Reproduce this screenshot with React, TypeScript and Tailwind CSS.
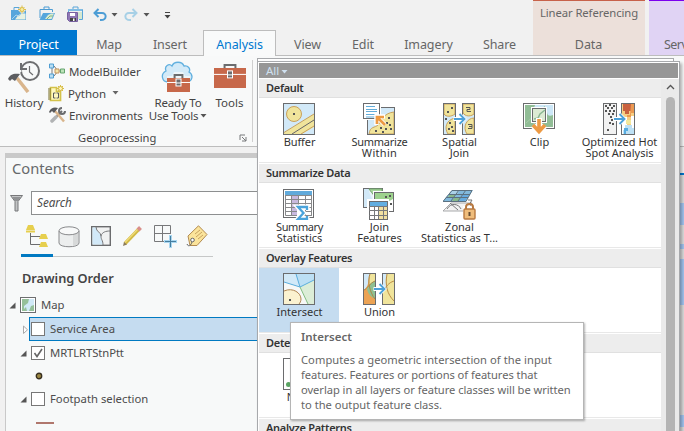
import type { ReactNode } from 'react';

type P = { children?: ReactNode };

const Svg = ({ w, h, className = '', children }: P & { w: number; h: number; className?: string }) => (
  <svg width={w} height={h} viewBox={`0 0 ${w} ${h}`} fill="none" className={`block shrink-0 ${className}`}>
    {children}
  </svg>
);

const Down = ({ className = '', color = '#666' }: { className?: string; color?: string }) => (
  <Svg w={7} h={4} className={className}><path d="M.5 0h6l-3 3.500z" fill={color} /></Svg>
);

/* ---------- quick access ---------- */
const NewProject = () => (
  <Svg w={16} h={16}>
    <path d="M3 5V2.500h5V5" stroke="#5aa5d8" />
    <path d="M0 5h15v10H0z" fill="#56a6dc" />
    <path d="M4 14.500l3-4 3-2h4.500v6z" fill="#e8f2e2" />
    <path d="M1 14l4-4 3 1 3-3h3" stroke="#a8d2ec" />
    <path d="M7 5l4-4 4 4-4 4z" fill="#f1f1f1" />
    <path d="M11 .5v8M7 4.500h8M8.500 2l5 5M13.500 2l-5 5" stroke="#dcbf4c" />
    <circle cx="11" cy="4.500" r="2" fill="#f8eca0" stroke="#dcbf4c" />
  </Svg>
);
const OpenProject = () => (
  <Svg w={16} h={16}>
    <path d="M5 4V2h5v2M1 13V4.500h12.500V7" stroke="#4d9cd3" />
    <path d="M4 8h12l-3 7H.5z" fill="#56a6dc" />
    <path d="M6 14l3-4 3-1.500h3L12.500 14z" fill="#dbead2" />
    <path d="M8 14l3-3h3" stroke="#7fb880" />
  </Svg>
);
const SaveProject = () => (
  <Svg w={17} h={16}>
    <path d="M6 3V1h5v2M1.500 6V3.500h14v10H12" stroke="#5aa5d8" />
    <path d="M11 6h4v7h-4z" fill="#d5e8d0" /><path d="M1 3h14v2H1z" fill="#80bde4" />
    <path d="M.5 6.500h10v9h-8l-2-2z" fill="#8f78b5" stroke="#77609f" />
    <path d="M3 7h5v3H3z" fill="#fff" /><path d="M3 12h6v3H3z" fill="#444" /><path d="M6 12.500h1.500V15H6z" fill="#fff" />
  </Svg>
);
const UndoArrow = ({ color, flip = false }: { color: string; flip?: boolean }) => (
  <Svg w={14} h={14} className={flip ? '-scale-x-100' : ''}>
    <path d="M5.500 1L1.500 5l4 4M2 5h7c5 0 5 7-1 7H7" stroke={color} strokeWidth="2" />
  </Svg>
);

/* ---------- ribbon ---------- */
const HistoryIcon = () => (
  <Svg w={32} h={32}>
    <circle cx="22" cy="10" r="9" stroke="#6d6e70" strokeWidth="2" />
    <path d="M8 5l6 5-6 5z" fill="#f8f9f9" /><path d="M13 2v6h6" stroke="#6d6e70" strokeWidth="2" />
    <path d="M21.500 5v6l3.500 3" stroke="#6d6e70" strokeWidth="1.200" />
    <path d="M9.500 17l11 14" stroke="#f8f9f9" strokeWidth="6" />
    <path d="M9 17l11 14" stroke="#d9b58c" strokeWidth="3.500" />
    <path d="M0 18c2-5 6-6 12-5l-5 7-3-2-2 2z" fill="#5c5d60" />
  </Svg>
);
const ModelIcon = () => (
  <Svg w={16} h={16}>
    <path d="M3 5v6M5 3l4 5-4 5M9 8h3" stroke="#77797b" />
    <path d="M.5 1h4v4h-4zM.5 11h4v4h-4z" fill="#b9def3" stroke="#509ed2" />
    <path d="M6 6h4v4H6z" fill="#f3e6aa" stroke="#c5935c" /><path d="M11.500 6h4v4h-4z" fill="#bce3b8" stroke="#64a46e" />
  </Svg>
);
const PythonIcon = () => (
  <Svg w={17} h={17}>
    <path d="M2.500 2.500h6v4h4v9h-10z" fill="#fff8bd" stroke="#d3c24a" strokeWidth="1.700" />
    <path d="M0 4h3M0 6h3M0 8h3M0 10h3M0 12h3M0 14h3" stroke="#787032" />
    <path d="M7.500 8H5.500v5h2M8.500 8h2v5h-2" stroke="#595959" />
    <path d="M12.500 0v7M9 3.500h7M10 1l5 5M15 1l-5 5" stroke="#d8bf45" />
    <circle cx="12.500" cy="3.500" r="2" fill="#fff6b7" stroke="#d3b53a" />
  </Svg>
);
const EnvIcon = () => (
  <Svg w={17} h={16}>
    <path d="M3 14l4-4" stroke="#b1b3b4" strokeWidth="3.500" strokeLinecap="round" />
    <path d="M8 9l5-5" stroke="#6b6c6e" strokeWidth="2" />
    <path d="M13 1a3 3 0 1 0 3 3" stroke="#6b6c6e" strokeWidth="2" />
    <path d="M6 4l9 10.500" stroke="#d9b58c" strokeWidth="2.500" /><path d="M0 5c2-5 6-5 9-4L5 6 3 4 1 6z" fill="#58595b" />
  </Svg>
);
const Box = ({ x, y, w, h }: { x: number; y: number; w: number; h: number }) => (
  <>
    <path d={`M${x + w * 0.33} ${y + 1}v-4h${w * 0.34}v4`} stroke="#6b6c6e" strokeWidth="2" />
    <rect x={x} y={y} width={w} height={h} fill="#c7684a" />
    <path d={`M${x} ${y + h * 0.32}h${w}`} stroke="#fff" />
    <rect x={x + w / 2 - 3} y={y + h * 0.32 - 4} width="6" height="8" fill="#fff" />
    <rect x={x + w / 2 - 2} y={y + h * 0.32 - 3} width="4" height="3" fill="#6b6c6e" />
    <rect x={x + w / 2 - 2} y={y + h * 0.32 + 1} width="4" height="2" fill="#6b6c6e" />
  </>
);
const ReadyIcon = () => (
  <Svg w={34} h={33}>
    <path d="M7 21C1 21-1 13 5 10 3 5 8 2 11 5c2-5 10-5 12 0 4-1 7 3 5 6 5 3 3 9-1 10z" fill="#d3eaf8" stroke="#62b0df" strokeWidth="1.300" />
    <path d="M6 15h5l2-4h9l2 4h5v16H6z" fill="#f8f9f9" opacity=".7" />
    <Box x={6} y={17} w={23} h={14} />
  </Svg>
);
const ToolsIcon = () => <Svg w={32} h={27}><Box x={0} y={5} w={32} h={20} /></Svg>;

/* ---------- contents tabs ---------- */
const Trap = ({ x, y, w, h }: { x: number; y: number; w: number; h: number }) => (
  <path d={`M${x + 2} ${y}h${w - 4}l2 ${h}H${x}z`} fill="#e6cf4e" />
);
const TreeIcon = () => (
  <Svg w={23} h={23}>
    <Trap x={0} y={0} w={9} h={5} /><path d="M0 6.500h9" stroke="#e6cf4e" strokeWidth="2" />
    <path d="M4.500 8v11.500H14M4.500 11.500H14" stroke="#6b6c6e" />
    <Trap x={13} y={9} w={9} h={5} /><Trap x={13} y={17} w={9} h={5} />
  </Svg>
);
const Cylinder = () => (
  <Svg w={22} h={22}>
    <path d="M1 5v12c0 5 20 5 20 0V5" fill="#eceeee" stroke="#88898b" /><path d="M15 7v13l5-2V5z" fill="#d7d9d9" />
    <ellipse cx="11" cy="4.800" rx="10" ry="4" fill="#f8f9f9" stroke="#88898b" />
  </Svg>
);
const SelectIcon = () => (
  <Svg w={20} h={20}>
    <rect x=".7" y=".7" width="18.600" height="18.600" fill="#f1f2f2" stroke="#6b6c6e" strokeWidth="1.400" />
    <path d="M1.500 1.500H5c0 5 5 5 5 9-1 3 2 4 2 8H1.500z" fill="#d2e9f8" />
    <path d="M5 1c0 5 5 5 5 9s2 4 2 9M10 10c1-4 5-5 9-5" stroke="#77787a" />
  </Svg>
);
const PencilIcon = () => (
  <Svg w={20} h={20}>
    <path d="M2 17.500L16 3" stroke="#d2ba46" strokeWidth="3.600" /><path d="M2 16.500L15 3" stroke="#f0dc79" strokeWidth="1.200" />
    <path d="M15 4l2.500-2.500" stroke="#d98f8b" strokeWidth="4" /><path d="M0 20l1-4 3 2.500z" fill="#8a7a5c" />
  </Svg>
);
const SnapIcon = () => (
  <Svg w={23} h={23}>
    <path d="M.5.500h16v16H.5zM8.500.500v16M.5 8.500h16" stroke="#77787a" />
    <path d="M16.500 9v14M10 16.500h13" stroke="#f8f9f9" strokeWidth="5" />
    <path d="M16.500 10v13M10 16.500h13" stroke="#a8d7f1" strokeWidth="3" /><path d="M16.500 11v11M11 16.500h11" stroke="#467e9f" />
  </Svg>
);
const TagIcon = () => (
  <Svg w={22} h={22}>
    <path d="M2 11L12.500.8 21 9.500 11 20.500H4z" fill="#fbe49b" stroke="#b28b51" />
    <path d="M9 9l5-4M10 12l6-5M12 14l5-4" stroke="#c7a361" />
    <circle cx="6.500" cy="15" r="1.800" fill="#fff" stroke="#666" /><path d="M6 17c-1 4-4 5-5 2" stroke="#666" />
  </Svg>
);
const MapIcon = () => (
  <Svg w={16} h={16}>
    <rect x=".5" y=".5" width="15" height="15" fill="#fff" stroke="#6d6e70" /><path d="M2 2h12v12H2z" fill="#95c09a" />
    <path d="M9 2h5v6l-3 1-2 5H7l-1-4-2 2V9l4-3z" fill="#d0e9f7" />
  </Svg>
);

/* ---------- gallery ---------- */
const dark = '#6b6c6e';
const Frame = ({ x, y, w, h, fill = 'none' }: { x: number; y: number; w: number; h: number; fill?: string }) => (
  <rect x={x + 0.5} y={y + 0.5} width={w - 1} height={h - 1} fill={fill} stroke={dark} />
);
const ArrowRight = () => (
  <>
    <path d="M10.500 16H20M16 11l5 5-5 5" stroke="#fff" strokeWidth="4" />
    <path d="M11 16h10M16.500 11l5 5-5 5" stroke="#4da2da" strokeWidth="1.900" />
  </>
);
const Dots = ({ pts, c = '#555', s = 2 }: { pts: number[][]; c?: string; s?: number }) => (
  <>{pts.map(([x, y], i) => <rect key={i} x={x} y={y} width={s} height={s} fill={c} />)}</>
);
const BufferI = () => (
  <Svg w={32} h={32}>
    <Frame x={0} y={0} w={32} h={32} fill="#d2e9f8" />
    <circle cx="11" cy="11" r="7.500" fill="#f0e49b" stroke="#c9a15b" /><Dots pts={[[10, 10]]} />
    <path d="M1 31v-1l30-19v13L19 31z" fill="#f0e49b" />
    <path d="M1 29.500L31 11M18 31l13-8" stroke="#c9a15b" /><path d="M9 31l22-14" stroke="#666" /><Frame x={0} y={0} w={32} h={32} />
  </Svg>
);
const SumWithin = () => (
  <Svg w={32} h={32}>
    <Frame x={4} y={4} w={28} h={28} fill="#d2e9f8" />
    <path d="M6 31c1-8 6-6 9-9 4-5 6-12 16-13v22z" fill="#f0e49b" stroke="#c9a15b" />
    <Dots pts={[[25, 14], [23, 19], [26, 21], [12, 27], [17, 24], [22, 25], [27, 25], [19, 28]]} />
    <Frame x={4} y={4} w={28} h={28} /><path d="M0 0h18v17H0z" fill="#fff" /><Frame x={0} y={0} w={17} h={16} fill="#fff" />
    <path d="M3 3.500h9M3 6.500h11M3 8.500h11M3 11.500h9M3 14h9" stroke="#62acd9" />
    <path d="M22 22l-7-7M13.500 22v-8.500h8.500" stroke="#fff" strokeWidth="4.500" />
    <path d="M22 22l-7-7M14 21v-7h7" stroke="#ed9a43" strokeWidth="2.700" />
  </Svg>
);
const SpatialI = () => (
  <Svg w={32} h={32}>
    <Frame x={0} y={0} w={13} h={32} fill="#d2e9f8" /><Frame x={19} y={0} w={13} h={32} fill="#d2e9f8" />
    <path d="M1 1h11v10c-4 3-9 3-11 0zM12 15C3 17 1 25 5 31h7zM20 1h11v10c-5 4-11 1-11-2zM31 15c-7 0-12 9-7 16h7z" fill="#f0e49b" stroke="#c9a15b" />
    <Dots pts={[[8, 4], [4, 8], [2, 15], [6, 19], [8, 23], [5, 25], [9, 27]]} />
    <path d="M23 4.500h4v2h-3v2h4M25 21.500h4v4h-4m1-2h3" stroke="#555" />
    <Frame x={0} y={0} w={13} h={32} /><Frame x={19} y={0} w={13} h={32} /><ArrowRight />
  </Svg>
);
const ClipI = () => (
  <Svg w={32} h={32}>
    <Frame x={0} y={0} w={32} h={26} fill="#fff" /><path d="M2 2h28v22H2z" fill="#91bd96" />
    <path d="M12 2h18v10c-4 2-6 0-6-3l-5 2-8 10-3-7z" fill="#cce7f7" /><path d="M3 20L22 3" stroke="#a9cba9" />
    <path d="M8 4h16v16H8z" fill="#fff" />
    <Frame x={9} y={5} w={14} h={14} fill="#dcebd3" /><path d="M11 16l4-1 2-4 5-4" stroke="#8bb793" strokeWidth="1.500" />
    <path d="M16 15v12M10 22.500l6 6 6-6" stroke="#fff" strokeWidth="6" />
    <path d="M16 16v12M10 22l6 6.500 6-6.500" stroke="#ed9a43" strokeWidth="3.600" />
  </Svg>
);
const HotI = () => (
  <Svg w={32} h={32}>
    <Frame x={0} y={0} w={14} h={32} fill="#f2f2f2" />
    <Dots pts={[[2, 2], [6, 1], [10, 2], [4, 4], [8, 4], [2, 7], [6, 7], [10, 7], [5, 10], [9, 10], [7, 13], [8, 16], [6, 19], [9, 20], [4, 26]]} />
    <Frame x={18} y={0} w={14} h={32} fill="#fff" />
    <path d="M19 1h12v12h-3v12h-4V14h-5z" fill="#f7cf83" /><path d="M20 1h8v7h-2v3h-4V8h-2z" fill="#c9613f" /><path d="M28 1h3v9h-3v4h-4v-2h3z" fill="#eb9952" />
    <path d="M23 17h5v4h-5z" fill="#f2e89c" /><path d="M22 22h7v3h2v6H20v-4h2z" fill="#bee1f5" /><path d="M21 25h4v3h-2v3h-2z" fill="#58ace1" />
    <Frame x={18} y={0} w={14} h={32} /><ArrowRight />
  </Svg>
);
const SumStat = () => (
  <Svg w={32} h={32}>
    <Frame x={0} y={1} w={31} h={29} fill="#fff" /><path d="M2 3h27v4H2z" fill="#61aadb" /><path d="M9 7h6v21H9z" fill="#c8b9df" />
    <path d="M2.500 7v20.500H29M8.500 7v21M15.500 7v21M22.500 7v21M28.500 7v21M2 7.500h27M2 11.500h27M2 15.500h27M2 19.500h27M2 23.500h27" stroke="#88898b" />
    <path d="M24 22v-3h-9l5.500 6-5.500 6h9v-3" stroke="#fff" strokeWidth="5" /><path d="M14 18h9l-3 13h-6z" fill="#fff" /><path d="M24 22v-3h-9l5.500 6-5.500 6h9v-3" stroke="#4aa3db" strokeWidth="2.300" />
  </Svg>
);
const JoinF = () => (
  <Svg w={32} h={32}>
    <Frame x={0} y={0} w={20} h={20} fill="#e9f3f7" /><path d="M1 1h5c0 8 5 8 4 18H1z" fill="#d2e9f8" /><path d="M6 1h13v9C12 11 10 6 6 1z" fill="#a8d69c" stroke="#73a96c" />
    <path d="M10 3h22v22H10z" fill="#fff" /><Frame x={11} y={4} w={20} h={20} fill="#fff" /><path d="M12 5h18v6c-5 4-15 4-18 0z" fill="#9dd28d" /><Dots pts={[[22, 8], [26, 7], [27, 15]]} />
    <path d="M4 11h22v21H4z" fill="#fff" /><Frame x={6} y={13} w={19} h={19} fill="#fff" /><path d="M7 14h17v4H7z" fill="#62aee0" /><path d="M16 18h8v13h-8z" fill="#f1dfa1" />
    <path d="M6 18.500h19M6 22.500h19M6 27.500h19M11.500 18v13M15.500 18v13M20.500 18v13" stroke="#77787a" />
  </Svg>
);
const ZonalI = () => (
  <Svg w={33} h={32}>
    <path d="M0 23l8-8h21l-5 8z" fill="#f3f3f3" stroke="#a8a9ab" /><path d="M4 21c4-7 12-5 14 0M7 15l8 7" stroke="#77787a" />
    <path d="M0 13L9 2h21l-7 11z" fill="#82b9dc" /><path d="M10 2h7l-3 4H7zM7 6l7 0-3 4H4z" fill="#abd1e7" /><path d="M7 6h7l-3 3H5zM12 9h7l-3 4H9z" fill="#88b889" /><path d="M20 6h7l-5 7h-6z" fill="#66aade" />
    <path d="M0 13.500L9 2.500h20l-6 11zM3 9.500h22M6 6.500h21M16 2L8 13M23 2l-8 11" stroke="#5c7180" />
    <path d="M25 12h4l-3 5" stroke="#77787a" />
    <path d="M20 18h13v14H20z" fill="#fff" /><path d="M23 22v-3c0-4 7-4 7 0v3" stroke="#b87941" strokeWidth="2" />
    <rect x="21" y="21" width="11" height="10" rx="1" fill="#efbd7c" stroke="#b87941" strokeWidth="1.400" /><path d="M26.500 24v4" stroke="#654c32" strokeWidth="2" />
  </Svg>
);
const IntersectI = () => (
  <Svg w={32} h={32}>
    <rect width="32" height="32" fill="#f7f8f7" /><path d="M1 1h30v6l-14 7L1 9z" fill="#d2e9f8" /><path d="M13 1h18v6l-14 7z" fill="#bcdff4" /><path d="M17 14l14-7v24h-6z" fill="#dcedd7" />
    <path d="M1 9l16 5M13 1l4 13L31 7" stroke="#5aaddd" /><path d="M17 14l8 17" stroke="#83bd82" />
    <path d="M1 18c9-4 17 2 17 8 0 2-1 4-2 5H1z" fill="#fbf2d0" /><path d="M1 18c9-4 17 2 17 8 0 2-1 4-2 5" stroke="#af8451" /><Dots pts={[[6, 26]]} />
    <Frame x={0} y={0} w={32} h={32} />
  </Svg>
);
const UnionI = () => (
  <Svg w={32} h={32}>
    <Frame x={0} y={0} w={13} h={32} fill="#eca354" /><Frame x={19} y={0} w={13} h={32} fill="#f0e49b" />
    <path d="M1 1h6c-2 6-1 10-4 14l-2 2z" fill="#d2e9f8" /><path d="M7 1h5v7l-6 4z" fill="#f0e49b" /><path d="M12 8c-5 2-6 4-8 8 1 5 4 8 8 10z" fill="#8fc092" />
    <path d="M7 1C4 8 7 20 12 26M12 8C7 10 4 16 1 17" stroke="#ad8746" />
    <path d="M20 1h4c-2 6-2 10 1 15l-5-1z" fill="#d2e9f8" /><path d="M24 1c-2 11 0 20 7 27M31 8c-6 2-7 5-11 10" stroke="#bd8e46" />
    <Frame x={0} y={0} w={13} h={32} /><Frame x={19} y={0} w={13} h={32} /><ArrowRight />
  </Svg>
);
const NearI = () => (
  <Svg w={32} h={32}><Frame x={0} y={0} w={32} h={32} fill="#fff" /><circle cx="5.500" cy="26.500" r="2.500" fill="#5aa463" /></Svg>
);

const Cell = ({ icon, children, on = false }: P & { icon: ReactNode; on?: boolean }) => (
  <div className={`flex w-20 shrink-0 flex-col items-center pt-[5px] text-[11px] leading-[11px] whitespace-nowrap text-[#333] ${on ? 'bg-[#c5dcf0]' : ''}`}>
    {icon}
    <div className="mt-px pl-px text-center">{children}</div>
  </div>
);
const Section = ({ title, children }: P & { title: string }) => (
  <section className="flex h-[85px] shrink-0 flex-col">
    <h3 className="h-[19px] border-b border-[#e0e0e0] bg-[#ededed] pl-[7px] text-[11px] leading-[18px] font-semibold tracking-[-0.3px] text-[#333]">{title}</h3>
    <div className="mb-px flex flex-1 border-b border-[#e8e8e8]">{children}</div>
  </section>
);

const Tab = ({ children, className }: { children: string; className: string }) => (
  <div className={`flex h-[26px] shrink-0 items-center justify-center border-b border-[#bdbdbd] pt-[5px] ${className}`}>{children}</div>
);
const Expander = ({ open = true, className = '' }: { open?: boolean; className?: string }) => (
  <Svg w={7} h={9} className={className}>
    {open ? <path d="M6.500 1.500v6h-6z" fill="#555" /> : <path d="M1.500 1v7.500l4-3.700z" fill="#fff" stroke="#aaa" />}
  </Svg>
);
const Check = ({ on = false }: { on?: boolean }) => (
  <span className="block size-[14px] shrink-0 border border-[#777] bg-white">
    {on && <Svg w={12} h={12}><path d="M2.500 6l2.500 3.500L10 2" stroke="#666" strokeWidth="1.600" /></Svg>}
  </span>
);

function Header() {
  return (
    <header className="flex h-14 shrink-0 text-[12.5px] tracking-[-0.1px] text-[#666]">
      <div className="flex w-[533px] shrink-0 flex-col">
        <div className="flex h-[30px] items-center pl-[11px]">
          <div className="-mt-1"><NewProject /></div>
          <div className="-mt-1 ml-3"><OpenProject /></div>
          <div className="-mt-0.5 ml-3"><SaveProject /></div>
          <div className="ml-[9px]"><UndoArrow color="#4d9dd5" /></div>
          <Down className="ml-[4px]" color="#555" />
          <div className="ml-[6px]"><UndoArrow color="#a7d0e6" flip /></div>
          <Down className="ml-[5px]" color="#555" />
          <Svg w={7} h={7} className="ml-[14px]"><path d="M1 .5h5" stroke="#444" /><path d="M.5 3h6l-3 3.500z" fill="#444" /></Svg>
        </div>
        <nav className="flex h-[26px]">
          <Tab className="w-[77px] bg-[#0078d0] text-white">Project</Tab>
          <Tab className="w-16">Map</Tab>
          <Tab className="w-[62px] pr-1">Insert</Tab>
          <div className="flex h-[26px] w-[73px] shrink-0 items-center justify-center border border-b-0 border-[#bdbdbd] bg-[#f9fafa] pt-[3px] text-[#0078d0]">Analysis</div>
          <Tab className="w-[63px]">View</Tab>
          <Tab className="w-12">Edit</Tab>
          <Tab className="w-[83px]">Imagery</Tab>
          <Tab className="flex-1 pr-1">Share</Tab>
        </nav>
      </div>
      <div className="flex w-28 shrink-0 flex-col border-t border-[#c7624a] bg-[#ece0da]">
        <div className="flex-1 pt-[2px] text-center text-[11.3px] leading-[19px]">Linear Referencing</div>
        <Tab className="pr-px">Data</Tab>
      </div>
      <div className="w-1 shrink-0 border-b border-[#bdbdbd]" />
      <div className="flex w-[35px] shrink-0 flex-col justify-end overflow-hidden border-t border-[#7b00ee] bg-[#e0d3f4]">
        <Tab className="w-[68px] tracking-[-0.5px]">Service</Tab>
      </div>
    </header>
  );
}

function Ribbon() {
  return (
    <div className="flex h-[91px] shrink-0 border-b border-[#bdbdbd] bg-[#f8f9f9] text-[11.5px] leading-[13px] whitespace-nowrap text-[#444]">
      <div className="flex w-[252px] flex-col">
        <div className="flex h-[75px] pt-[5px]">
          <div className="flex w-[48px] flex-col items-center"><HistoryIcon /><span className="mt-[3px]">History</span></div>
          <div className="flex w-[98px] flex-col">
            <div className="flex h-[20px] items-center gap-1 pl-px tracking-[-0.1px]"><ModelIcon />ModelBuilder</div>
            <div className="flex h-[24px] items-center gap-[3px]"><PythonIcon />Python<Down className="ml-[3px]" /></div>
            <div className="flex h-[20px] items-center gap-[3px] pl-px tracking-[-0.1px]"><EnvIcon />Environments</div>
          </div>
          <div className="flex w-[64px] flex-col items-center">
            <ReadyIcon />
            <span className="mt-0.5 tracking-[-0.2px]">Ready To</span>
            <span className="flex items-center gap-0.5 tracking-[-0.2px]">Use Tools<Down color="#555" /></span>
          </div>
          <div className="flex w-[39px] flex-col items-center pt-[2px]"><ToolsIcon /><span className="mt-[6px]">Tools</span></div>
        </div>
        <div className="flex items-center pl-[78px] text-[11.2px]">
          <span className="w-[161px]">Geoprocessing</span>
          <Svg w={8} h={8}><path d="M1 6V1h5M3 3l4 4M7 3v4H3" stroke="#77787a" /></Svg>
        </div>
      </div>
      <div className="mt-1 mb-1 w-px bg-[#cfcfcf]" />
    </div>
  );
}

function Contents() {
  return (
    <aside className="mt-1.5 ml-[5px] flex w-[300px] flex-1 flex-col border-t-[5px] border-l border-t-[#c9c9c9] border-l-[#c9c9c9] bg-[#f7f9f9] text-[11.3px] whitespace-nowrap text-[#4c4c4c]">
      <h2 className="h-[33px] shrink-0 pl-[6px] text-[14.7px] leading-[21px] text-[#66696b]">Contents</h2>
      <div className="flex h-6 shrink-0 items-center">
        <Svg w={14} h={17} className="ml-1 mr-[7px]"><path d="M.5.500h12L8 6.500V16H5V6.500z" fill="#c2c4c5" stroke="#77787a" /><path d="M2 2h9L8 6H5z" fill="#909294" /></Svg>
        <div className="flex h-6 flex-1 items-center border border-[#8d8f90] bg-white pl-[5px] text-[11.7px] italic">Search</div>
      </div>
      <div className="mt-[9px] ml-[15px] flex h-[33px] w-[192px] shrink-0 border-b border-[#c6c8c8]">
        <div className="-mb-px flex w-8 shrink-0 border-b-[3px] border-[#007ac2] pt-px pl-[5px]"><TreeIcon /></div>
        <div className="flex w-[33px] pt-0.5 pl-[5px]"><Cylinder /></div>
        <div className="flex w-[32px] pt-0.5 pl-[5px]"><SelectIcon /></div>
        <div className="flex w-[31px] pt-0.5 pl-[5px]"><PencilIcon /></div>
        <div className="flex w-[32px] pt-px pl-[5px]"><SnapIcon /></div>
        <div className="flex w-[32px] pt-px pl-[5px]"><TagIcon /></div>
      </div>
      <h3 className="mt-[11px] h-[20px] shrink-0 pl-4 text-[12.8px] leading-[20px] font-semibold tracking-[-0.05px] text-[#444]">Drawing Order</h3>
      <div className="mt-[5px] flex shrink-0 flex-col">
        <div className="flex h-6 items-center pl-[3px]"><Expander className="mr-1" /><MapIcon /><span className="ml-[5px]">Map</span></div>
        <div className="flex h-6 items-center pl-4">
          <Expander open={false} />
          <div className="flex h-6 flex-1 items-center gap-[5px] border border-[#007ac2] bg-[#c5dcf0] pl-px"><Check />Service Area</div>
        </div>
        <div className="flex h-6 items-center pl-[14px]"><Expander className="mr-1" /><Check on /><span className="ml-[5px] tracking-[-0.1px]">MRTLRTStnPtt</span></div>
        <div className="flex h-[22px] items-center pl-[29px]"><Svg w={8} h={8}><circle cx="4" cy="4" r="2.700" fill="#9a8742" stroke="#383020" strokeWidth="1.400" /></Svg></div>
        <div className="flex h-6 items-center pl-[14px]"><Expander className="mr-1" /><Check /><span className="ml-[5px]">Footpath selection</span></div>
        <div className="flex h-6 items-center pl-[30px]"><div className="h-0.5 w-[18px] bg-[#b0776d]" /></div>
      </div>
    </aside>
  );
}

function Gallery() {
  return (
    <div className="absolute top-[61px] left-[257px] flex h-[380px] w-[423px] flex-col border border-[#a7a9ac] bg-white pt-px pl-px shadow-[2px_2px_3px_rgba(0,0,0,0.3)]">
      <div className="flex h-[15px] w-[419px] shrink-0 items-center bg-[#969696] pl-[7px] text-[11.5px] text-[#cfe0ef]">All<Down color="#cfe0ef" className="mt-0.5 ml-0.5" /></div>
      <div className="flex min-h-0 flex-1 pt-px">
        <div className="flex w-[402px] shrink-0 flex-col">
          <Section title="Default">
            <Cell icon={<BufferI />}><span className="tracking-[-0.1px]">Buffer</span></Cell>
            <Cell icon={<SumWithin />}><span className="tracking-[-0.25px]">Summarize</span><br /><span className="tracking-[0.3px]">Within</span></Cell>
            <Cell icon={<SpatialI />}>Spatial<br />Join</Cell>
            <Cell icon={<ClipI />}>Clip</Cell>
            <Cell icon={<HotI />}><span className="tracking-[0.05px]">Optimized Hot</span><br />Spot Analysis</Cell>
          </Section>
          <Section title="Summarize Data">
            <Cell icon={<SumStat />}><span className="tracking-[-0.4px]">Summary</span><br />Statistics</Cell>
            <Cell icon={<JoinF />}>Join<br />Features</Cell>
            <Cell icon={<ZonalI />}>Zonal<br />Statistics as T...</Cell>
          </Section>
          <Section title="Overlay Features">
            <Cell on icon={<IntersectI />}>Intersect</Cell>
            <Cell icon={<UnionI />}>Union</Cell>
          </Section>
          <Section title="Detect Incidents"><Cell icon={<NearI />}>Near</Cell></Section>
          <Section title="Analyze Patterns" />
        </div>
        <div className="flex w-[18px] flex-col items-center bg-[#eaeaea] pt-[5px]">
          <Svg w={9} h={6}><path d="M1 5l3.500-3.500L8 5" stroke="#555" strokeWidth="1.300" /></Svg>
          <div className="mt-[7px] w-[9px] flex-1 rounded-t-full bg-[#b4b4b4]" />
        </div>
      </div>
    </div>
  );
}

export default function App() {
  return (
    <div className="relative flex h-[431px] w-[684px] flex-col overflow-hidden bg-[#f1f1f1] font-['Noto_Sans',sans-serif]">
      <Header />
      <Ribbon />
      <div className="flex min-h-0 flex-1 justify-between">
        <div className="flex w-[305px]"><Contents /></div>
        <div className="flex w-1 shrink-0 flex-col bg-[#dcdcdc]">
          <div className="h-[28px] shrink-0 border-b-2 border-[#0078d0] bg-[#f1f1f1]" />
          <div className="mt-[28px] h-[22px] shrink-0 bg-[#a3c5f1]" />
          <div className="mt-[19px] h-[5px] shrink-0 bg-[#a3c5f1]" />
          <div className="mt-[10px] h-[46px] shrink-0 bg-[#a3c5f1]" />
          <div className="mt-[110px] h-[12px] shrink-0 bg-[#a3c5f1]" />
        </div>
      </div>
      <div className="absolute top-[58px] left-[257px] h-[10px] w-[417px] border border-[#a7a9ac] bg-white" />
      <Gallery />
      <div className="absolute top-[322px] left-[290px] h-[98px] w-[294px] border border-[#b5b5b5] bg-white pl-[10px] text-[11.15px] leading-[15px] whitespace-nowrap text-[#666] shadow-[1px_1px_2px_rgba(0,0,0,0.3)]">
        <div className="pt-[6px] text-[11.5px] leading-[15px] font-semibold">Intersect</div>
        <p className="mt-[8px]">
          <span className="tracking-[0.06px]">Computes a geometric intersection of the input</span><br />
          <span className="tracking-[-0.06px]">features. Features or portions of features that</span><br />
          <span className="tracking-[-0.04px]">overlap in all layers or feature classes will be written</span><br />
          to the output feature class.
        </p>
      </div>
    </div>
  );
}
